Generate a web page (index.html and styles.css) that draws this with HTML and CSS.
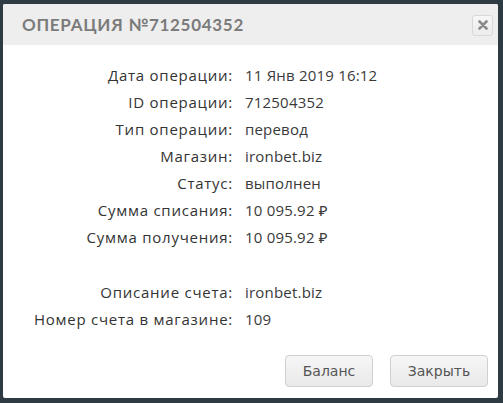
FILE: index.html
```html
<!DOCTYPE html>
<html lang="ru">
<head>
  <meta charset="UTF-8" />
  <title>Операция №712504352</title>
  <link rel="stylesheet" href="styles.css">
</head>
<body>

<div class="dialog">
  <div class="dialog-head">
    <h2>Операция №712504352</h2>
    <button type="button" class="close" title="Закрыть">
      <svg width="10" height="10" viewBox="0 0 10 10"><path d="M1.5 1.5 L8.5 8.5 M8.5 1.5 L1.5 8.5" stroke="#8a8a8a" stroke-width="2.6" stroke-linecap="round"/></svg>
    </button>
  </div>

  <div class="dialog-body">
    <div class="info">
      <span class="label">Дата операции:</span><span class="value">11 Янв 2019 16:12</span>
      <span class="label">ID операции:</span><span class="value">712504352</span>
      <span class="label">Тип операции:</span><span class="value">перевод</span>
      <span class="label">Магазин:</span><span class="value">ironbet.biz</span>
      <span class="label">Статус:</span><span class="value">выполнен</span>
      <span class="label">Сумма списания:</span><span class="value">10 095.92 ₽</span>
      <span class="label">Сумма получения:</span><span class="value">10 095.92 ₽</span>
      <span class="spacer"></span>
      <span class="label">Описание счета:</span><span class="value">ironbet.biz</span>
      <span class="label">Номер счета в магазине:</span><span class="value">109</span>
    </div>
  </div>

  <div class="dialog-foot">
    <button type="button" class="btn">Баланс</button>
    <button type="button" class="btn">Закрыть</button>
  </div>
</div>

</body>
</html>
```

FILE: styles.css
```css
body {
  margin: 0;
  background: #2e3b43;
  font-family: 'Open Sans', 'Noto Sans', sans-serif;
  height: 403px;
  overflow: hidden;
}

.dialog {
  margin: 4px 5px 0 3px;
  height: 394px;
  background: #fff;
  border-radius: 2px;
  display: flex;
  flex-direction: column;
}

.dialog-head {
  background: #eeeeee;
  height: 41px;
  display: flex;
  align-items: center;
  justify-content: space-between;
  padding: 0 5px 0 19px;
  border-radius: 2px 2px 0 0;
}

h2 {
  margin: 0;
  font-family: 'Lato', sans-serif;
  font-size: 17px;
  font-weight: 700;
  text-transform: uppercase;
  letter-spacing: 0.7px;
  color: #7b7b7b;
}

.close {
  width: 21px;
  height: 21px;
  padding: 0;
  margin-top: 1px;
  border: 1px solid #d9d9d9;
  border-radius: 3px;
  background: linear-gradient(#f7f7f7, #ececec);
  display: flex;
  align-items: center;
  justify-content: center;
}

.dialog-body {
  flex: 1;
  padding-top: 17px;
}

.info {
  display: grid;
  grid-template-columns: 230px 1fr;
  column-gap: 12px;
  font-size: 15px;
  line-height: 27px;
  color: #333;
}

.label {
  text-align: right;
  letter-spacing: 0.75px;
}

.value {
  color: #3a3a3a;
  letter-spacing: 0.2px;
}

.spacer {
  grid-column: 1 / 3;
  height: 28px;
}

.dialog-foot {
  display: flex;
  justify-content: flex-end;
  gap: 17px;
  padding: 0 10px 11px 0;
}

.btn {
  font-family: 'DejaVu Sans', Verdana, sans-serif;
  font-size: 14px;
  color: #555;
  height: 32px;
  padding: 0 14px;
  border: 1px solid #d0d0d0;
  border-radius: 4px;
  background: linear-gradient(#f6f6f6, #e9e9e9);
}

.btn:first-child {
  width: 88px;
}

.btn:last-child {
  width: 98px;
}
```
